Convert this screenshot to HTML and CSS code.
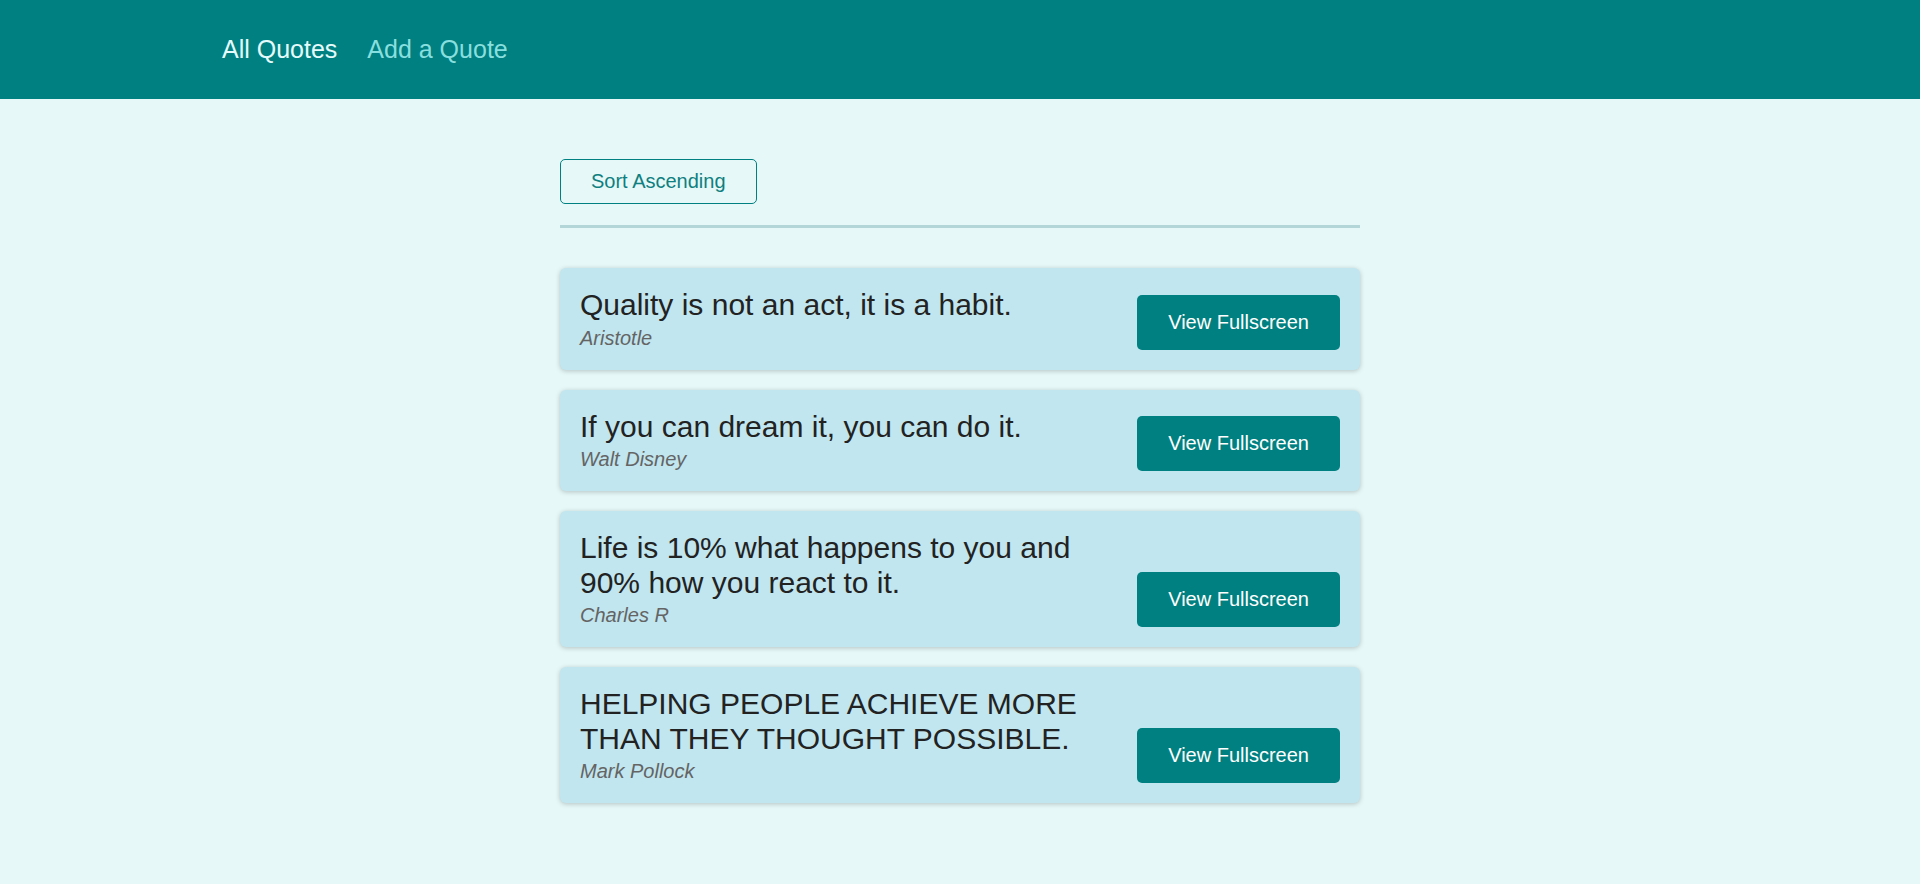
FILE: index.html
```html
<!DOCTYPE html>
<html lang="en">
<head>
<meta charset="utf-8">
<title>Great Quotes</title>
<link rel="stylesheet" href="styles.css">
</head>
<body>
<header class="header">
  <nav class="nav">
    <a class="nav-link active" href="#">All Quotes</a>
    <a class="nav-link" href="#">Add a Quote</a>
  </nav>
</header>
<main class="main">
  <div class="sorting">
    <button class="sort-btn">Sort Ascending</button>
  </div>
  <ul class="list">
    <li class="item">
      <figure class="quote">
        <blockquote class="quote-text">Quality is not an act, it is a habit.</blockquote>
        <figcaption class="author">Aristotle</figcaption>
      </figure>
      <a class="btn" href="#">View Fullscreen</a>
    </li>
    <li class="item">
      <figure class="quote">
        <blockquote class="quote-text">If you can dream it, you can do it.</blockquote>
        <figcaption class="author">Walt Disney</figcaption>
      </figure>
      <a class="btn" href="#">View Fullscreen</a>
    </li>
    <li class="item">
      <figure class="quote">
        <blockquote class="quote-text">Life is 10% what happens to you and 90% how you react to it.</blockquote>
        <figcaption class="author">Charles R</figcaption>
      </figure>
      <a class="btn" href="#">View Fullscreen</a>
    </li>
    <li class="item">
      <figure class="quote">
        <blockquote class="quote-text">HELPING PEOPLE ACHIEVE MORE THAN THEY THOUGHT POSSIBLE.</blockquote>
        <figcaption class="author">Mark Pollock</figcaption>
      </figure>
      <a class="btn" href="#">View Fullscreen</a>
    </li>
  </ul>
</main>
</body>
</html>
```

FILE: styles.css
```css
* { box-sizing: border-box; }

html, body {
  margin: 0;
  padding: 0;
}

body {
  font-family: "Liberation Sans", Arial, sans-serif;
  background: #e6f8f8;
  min-height: 884px;
}

.header {
  height: 99px;
  background: #008080;
  display: flex;
  align-items: center;
  padding-left: 222px;
}

.nav {
  display: flex;
  gap: 30px;
}

.nav-link {
  font-size: 25px;
  text-decoration: none;
  color: #88dfdf;
}

.nav-link.active {
  color: #e6fcfc;
}

.main {
  width: 800px;
  margin: 60px auto 0;
}

.sorting {
  padding-bottom: 21px;
  border-bottom: 3px solid #b3d6d8;
  margin-bottom: 40px;
}

.sort-btn {
  font-family: "Liberation Sans", Arial, sans-serif;
  font-size: 20px;
  line-height: 23px;
  padding: 10px 30px;
  color: #0f7f80;
  background: transparent;
  border: 1px solid #008080;
  border-radius: 5px;
  cursor: pointer;
}

.list {
  list-style: none;
  margin: 0;
  padding: 0;
  display: flex;
  flex-direction: column;
  gap: 20px;
}

.item {
  display: flex;
  align-items: flex-end;
  gap: 20px;
  padding: 20px;
  background: #c1e6ef;
  border-radius: 6px;
  box-shadow: 0 1px 5px rgba(0, 0, 0, 0.22);
}

.quote {
  flex: 1;
  margin: 0;
}

.quote-text {
  margin: 0;
  font-size: 30px;
  line-height: 34.5px;
  color: #222;
}

.author {
  margin-top: 4px;
  font-size: 20px;
  line-height: 23px;
  font-style: italic;
  color: #646464;
}

.btn {
  flex: none;
  display: block;
  font-size: 20px;
  line-height: 23px;
  padding: 16px 31px;
  background: #008080;
  color: #ffffff;
  text-decoration: none;
  border-radius: 5px;
}
```
